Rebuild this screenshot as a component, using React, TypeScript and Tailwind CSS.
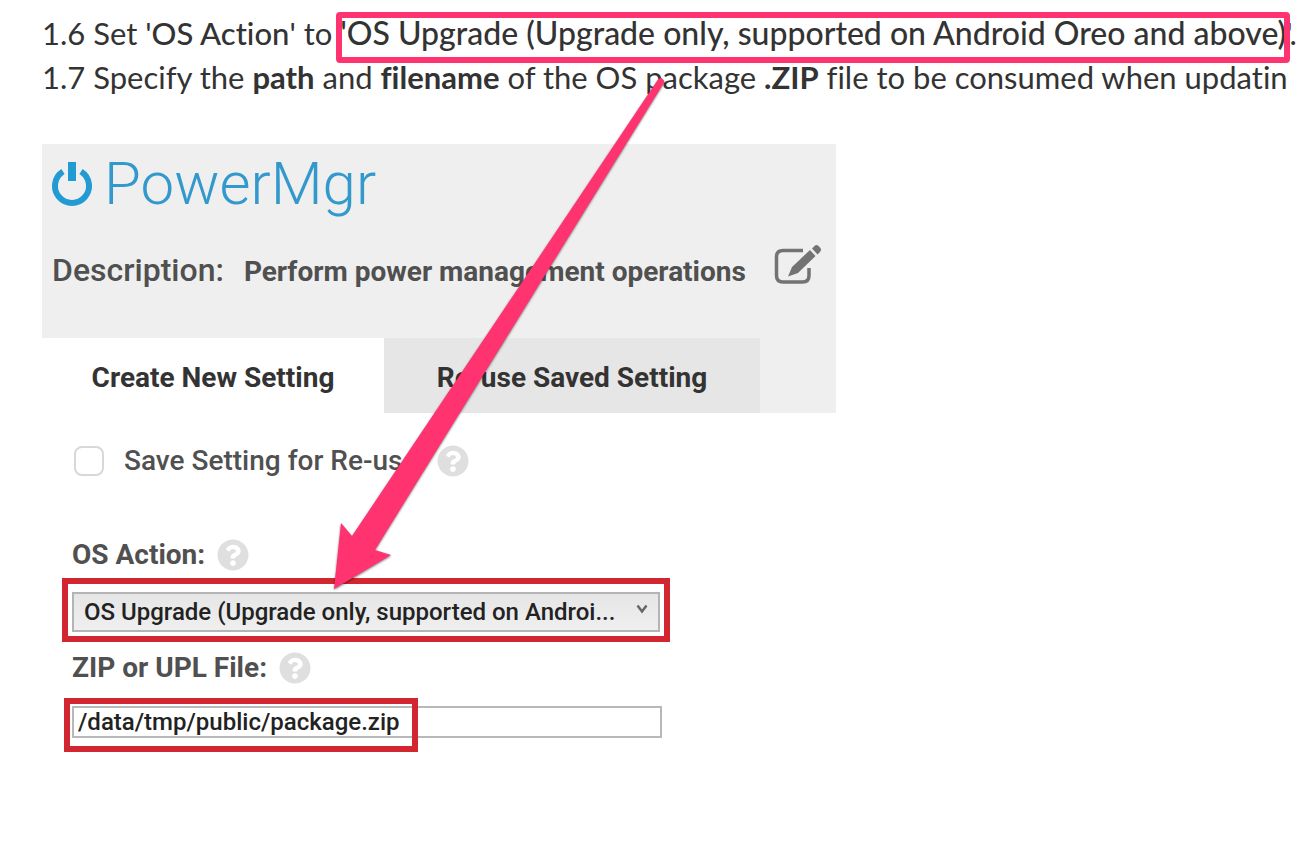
import { FaQuestionCircle } from 'react-icons/fa';

function HelpButton({ label }: { label: string }) {
  return (
    <button type="button" aria-label={label} className="text-[#dfdfdf]">
      <FaQuestionCircle className="size-8" />
    </button>
  );
}

function PowerIcon() {
  return (
    <svg viewBox="0 0 42 46" className="h-[46px] w-[42px]" aria-hidden="true">
      <path d="M13 10.500A17 17 0 1 0 31 10.500" fill="none" stroke="#229bd2" strokeWidth="6" />
      <rect x="18" y="1" width="8" height="19" fill="#229bd2" />
    </svg>
  );
}

function EditIcon() {
  return (
    <svg viewBox="0 0 48 44" className="h-11 w-12" aria-hidden="true">
      <path
        d="M29 6.500H9Q2.500 6.500 2.500 13V31.500Q2.500 38 9 38H28.500Q35 38 35 31.500V24"
        fill="none"
        stroke="#737373"
        strokeWidth="3.500"
      />
      <path d="M14 32.500L18 23L36 6L41.500 12L24 29Z" fill="#737373" />
      <path d="M38 4.500L40.500 2Q42.500 0 44.500 2L46.500 4Q48 6 46 8L43.500 10.500Z" fill="#737373" />
    </svg>
  );
}

function Instructions() {
  return (
    <div className="whitespace-nowrap font-['Lato',sans-serif] text-[31px] leading-11 text-[#333] [font-variant-ligatures:none]">
      <p>
        1.6 Set '<span className="font-medium">OS Action</span>' to{' '}
        <span className="relative inline-block text-[32px] font-medium">
          'OS Upgrade (Upgrade only, supported on Android Oreo and above)
          <span className="absolute -left-1 -right-1 top-px -bottom-2 rounded-sm border-6 border-[#ff3370]" />
        </span>
        '.
      </p>
      <p>
        1.7 Specify the <b className="font-bold">path</b> and <b className="font-bold">filename</b> of the OS package{' '}
        <b className="font-bold">.ZIP</b> file to be consumed when updatin
      </p>
    </div>
  );
}

function Header() {
  return (
    <header className="bg-[#efefef]">
      <div className="flex h-20 items-center gap-3 pl-2">
        <PowerIcon />
        <h1 className="font-light text-[60px] leading-20 text-[#3399cc]">PowerMgr</h1>
      </div>
      <div className="flex h-[114px] items-start pl-[10px] pt-5 font-medium text-[#505050]">
        <p className="flex items-baseline gap-5 leading-[52px]">
          <span className="text-[32px]">Description:</span>
          <span className="text-[28px] font-bold">Perform power management operations</span>
        </p>
        <button type="button" aria-label="Edit description" className="ml-7">
          <EditIcon />
        </button>
      </div>
      <div role="tablist" className="flex h-[75px] text-[28px] font-bold text-[#333]">
        <button type="button" role="tab" aria-selected="true" className="w-[342px] bg-white pt-1">
          Create New Setting
        </button>
        <button type="button" role="tab" aria-selected="false" className="w-[376px] bg-[#e6e6e6] pt-1">
          Re-use Saved Setting
        </button>
      </div>
    </header>
  );
}

function SettingForm() {
  return (
    <form className="flex flex-col pt-8 text-[28px] font-medium text-[#505050]">
      <div className="flex h-8 items-center pl-8">
        <input
          id="save"
          type="checkbox"
          className="size-[30px] appearance-none rounded-lg border-2 border-[#d8d8d8] bg-white"
        />
        <label htmlFor="save" className="pl-5 pr-5">
          Save Setting for Re-use
        </label>
        <HelpButton label="About saved settings" />
      </div>

      <div className="mt-15 flex h-9 items-center gap-3 pl-[30px]">
        <label htmlFor="action" className="font-bold">
          OS Action:
        </label>
        <HelpButton label="About OS action" />
      </div>
      <div className="relative ml-5 mt-[5px] w-[608px] border-6 border-[#d22630] p-1 pt-2">
        <select
          id="action"
          className="block h-10 w-full appearance-none border-2 border-[#b4b4b4] bg-linear-to-b from-[#e6e6e6] to-[#efefef] pl-[10px] text-[24px] text-[#222]"
        >
          <option>OS Upgrade (Upgrade only, supported on Androi...</option>
        </select>
        <svg viewBox="0 0 12 10" className="pointer-events-none absolute right-4 top-5 h-[10px] w-3" aria-hidden="true">
          <path d="M1.500 1.500L6 7.500L10.500 1.500" fill="none" stroke="#666" strokeWidth="2.500" />
        </svg>
      </div>

      <div className="mt-2 flex h-9 items-center gap-3 pl-[30px]">
        <label htmlFor="file" className="font-bold">
          ZIP or UPL File:
        </label>
        <HelpButton label="About the file" />
      </div>
      <div className="relative ml-[30px] mt-5 w-[590px]">
        <input
          id="file"
          type="text"
          defaultValue="/data/tmp/public/package.zip"
          className="block h-8 w-full border-2 border-[#b8b8b8] bg-white pl-1 text-[24px] text-[#222]"
        />
        <span className="pointer-events-none absolute -left-2 -top-2 h-[54px] w-[354px] border-6 border-[#d22630]" />
      </div>
    </form>
  );
}

function Arrow() {
  return (
    <svg
      viewBox="0 0 340 530"
      className="pointer-events-none absolute left-[330px] top-[70px] h-[530px] w-[340px] drop-shadow-[0_1px_1px_rgba(0,0,0,0.5)]"
      aria-hidden="true"
    >
      <path d="M328 9.500Q331 6.500 333 9.500Q335 11 333.500 13.500L45 480L61 485L4 519L11 453L22 466Z" fill="#ff3370" />
    </svg>
  );
}

export default function App() {
  return (
    <main className="relative min-h-screen overflow-hidden bg-white pl-[42px] pt-[11px]">
      <Instructions />
      <section className="mt-[45px] max-w-[794px] font-['Roboto',sans-serif]">
        <Header />
        <SettingForm />
      </section>
      <Arrow />
    </main>
  );
}
